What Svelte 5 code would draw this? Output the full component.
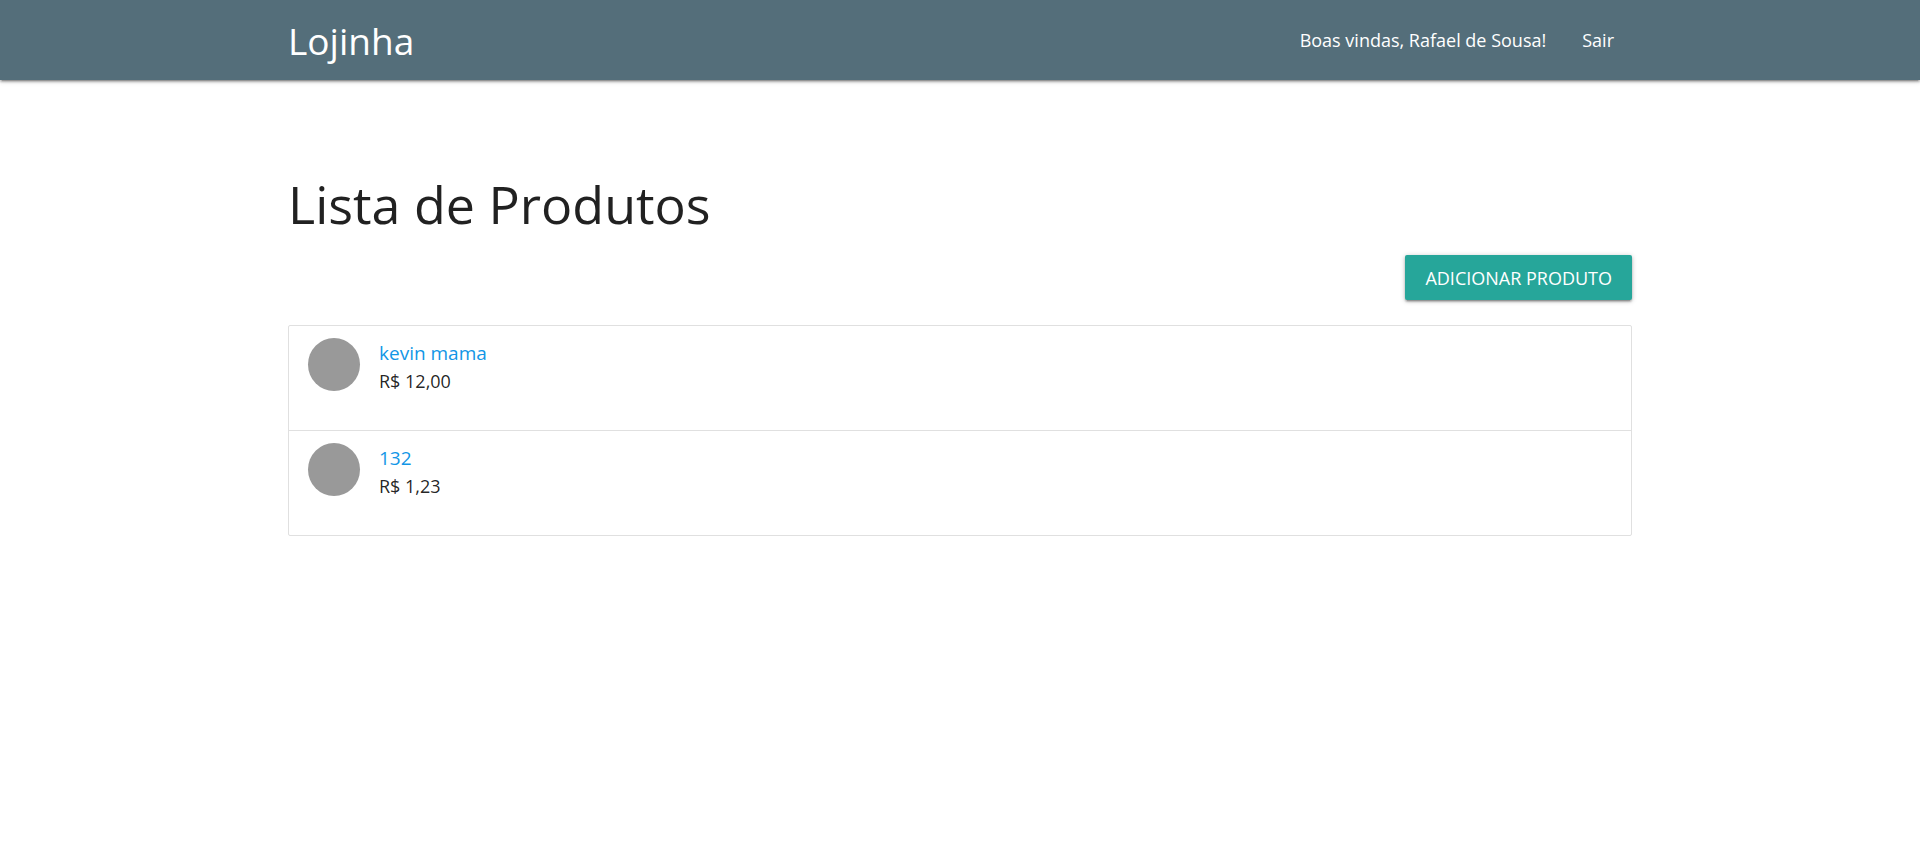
<script>
  const products = [
    { name: 'kevin mama', price: 'R$ 12,00' },
    { name: '132', price: 'R$ 1,23' }
  ];
</script>

<header>
  <nav class="container">
    <a class="brand" href="#home">Lojinha</a>
    <ul class="menu">
      <li><a href="#account">Boas vindas, Rafael de Sousa!</a></li>
      <li><a href="#logout">Sair</a></li>
    </ul>
  </nav>
</header>

<main class="container">
  <h1>Lista de Produtos</h1>
  <div class="actions">
    <button type="button">Adicionar produto</button>
  </div>
  <ul class="collection">
    {#each products as product}
      <li>
        <span class="avatar"></span>
        <div class="details">
          <a href="#product">{product.name}</a>
          <p>{product.price}</p>
        </div>
      </li>
    {/each}
  </ul>
</main>

<style>
  :global(body) {
    background: #fff;
    color: rgba(0, 0, 0, 0.87);
    font-family: "Segoe UI", "Open Sans", "Noto Sans", sans-serif;
    font-size: 18px;
    line-height: 28px;
  }
  .container {
    width: 70%;
    max-width: 1344px;
    margin: 0 auto;
  }
  ul {
    list-style: none;
    margin: 0;
    padding: 0;
  }
  a {
    color: #1296e6;
    text-decoration: none;
  }
  header {
    background: #546e7a;
    box-shadow: 0 2px 2px 0 rgba(0, 0, 0, 0.2), 0 3px 1px -2px rgba(0, 0, 0, 0.16), 0 1px 5px 0 rgba(0, 0, 0, 0.25);
  }
  nav {
    display: flex;
    justify-content: space-between;
    height: 80px;
    line-height: 80px;
  }
  nav a {
    color: #fff;
  }
  .brand {
    font-size: 37px;
    line-height: 82px;
  }
  .menu {
    display: flex;
  }
  .menu a {
    display: block;
    padding: 0 18px;
  }
  h1 {
    margin: 93px 0 20px;
    font-size: 52px;
    font-weight: 400;
    line-height: 62px;
  }
  .actions {
    display: flex;
    justify-content: flex-end;
  }
  button {
    height: 45px;
    padding: 0 20px;
    border: 0;
    border-radius: 2px;
    background: #26a69a;
    color: #fff;
    font: inherit;
    text-transform: uppercase;
    box-shadow: 0 2px 2px 0 rgba(0, 0, 0, 0.2), 0 3px 1px -2px rgba(0, 0, 0, 0.16), 0 1px 5px 0 rgba(0, 0, 0, 0.25);
  }
  .collection {
    margin: 25px 0;
    border: 1px solid #e0e0e0;
    border-radius: 2px;
  }
  .collection li {
    display: flex;
    gap: 19px;
    min-height: 80px;
    padding: 12px 19px;
  }
  .collection li + li {
    border-top: 1px solid #e0e0e0;
  }
  .avatar {
    width: 52px;
    height: 53px;
    border-radius: 50%;
    background: #999;
  }
  .details {
    padding-top: 1px;
  }
  .collection a {
    font-size: 19px;
  }
  p {
    margin: 0;
  }
</style>
